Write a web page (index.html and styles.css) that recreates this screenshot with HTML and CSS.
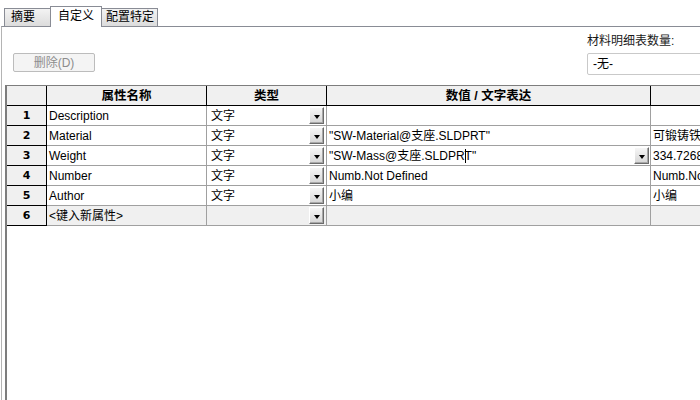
FILE: index.html
```html
<!DOCTYPE html>
<html lang="zh-CN">
<head>
<meta charset="utf-8">
<title>自定义属性</title>
<link rel="stylesheet" href="styles.css">
</head>
<body>
<div class="tabs">
  <div class="tab t1">摘要</div>
  <div class="tab t2 active">自定义</div>
  <div class="tab t3">配置特定</div>
</div>
<div class="panel">
  <div class="toolbar">
    <div class="left"><button class="btn" disabled>删除(D)</button></div>
    <div class="right">
      <div class="lbl">材料明细表数量:</div>
      <div class="combo">-无-</div>
    </div>
  </div>
  <div class="grid">
    <div class="c fix corner"></div>
    <div class="c fix hd">属性名称</div>
    <div class="c fix hd">类型</div>
    <div class="c fix hd">数值 / 文字表达</div>
    <div class="c fix hd"></div>

    <div class="c fix rn">1</div>
    <div class="c">Description</div>
    <div class="c typ"><span class="tx">文字</span><span class="dd"><span class="arr"></span></span></div>
    <div class="c"></div>
    <div class="c"></div>

    <div class="c fix rn">2</div>
    <div class="c">Material</div>
    <div class="c typ"><span class="tx">文字</span><span class="dd"><span class="arr"></span></span></div>
    <div class="c val">"SW-Material@支座.SLDPRT"</div>
    <div class="c">可锻铸铁</div>

    <div class="c fix rn">3</div>
    <div class="c">Weight</div>
    <div class="c typ"><span class="tx">文字</span><span class="dd"><span class="arr"></span></span></div>
    <div class="c val vdd"><span class="tx">"SW-Mass@支座.SLDPR<span class="caret"></span>T"</span><span class="dd"><span class="arr"></span></span></div>
    <div class="c">334.72680</div>

    <div class="c fix rn">4</div>
    <div class="c">Number</div>
    <div class="c typ"><span class="tx">文字</span><span class="dd"><span class="arr"></span></span></div>
    <div class="c val">Numb.Not Defined</div>
    <div class="c">Numb.Not Defined</div>

    <div class="c fix rn">5</div>
    <div class="c">Author</div>
    <div class="c typ"><span class="tx">文字</span><span class="dd"><span class="arr"></span></span></div>
    <div class="c val">小编</div>
    <div class="c">小编</div>

    <div class="c fix rn">6</div>
    <div class="c new">&lt;键入新属性&gt;</div>
    <div class="c new typ"><span class="tx"></span><span class="dd"><span class="arr"></span></span></div>
    <div class="c new"></div>
    <div class="c new"></div>
  </div>
</div>
</body>
</html>
```

FILE: styles.css
```css
html, body {
  margin: 0;
  padding: 0;
  background: #ffffff;
  overflow: hidden;
}
body {
  width: 700px;
  height: 400px;
  font-family: "Liberation Sans", "Noto Sans CJK SC", sans-serif;
  font-size: 12px;
  color: #000;
}
.tabs {
  display: flex;
  align-items: flex-end;
  height: 26px;
  padding-left: 4px;
  box-sizing: border-box;
}
.tab {
  box-sizing: border-box;
  height: 18px;
  line-height: 16px;
  border: 1px solid #898c95;
  border-bottom: none;
  background: linear-gradient(#f3f3f3, #dcdcdc);
  font-size: 12px;
  white-space: nowrap;
}
.t1 { width: 46px; padding-left: 6px; border-right: none; }
.t2 {
  width: 52px;
  height: 21px;
  margin-bottom: -1px;
  padding-left: 7px;
  line-height: 18px;
  background: #ffffff;
  position: relative;
  z-index: 1;
}
.t3 { width: 56px; padding-left: 4px; border-left: none; }
.panel {
  margin-left: 1px;
  border-left: 1px solid #b4b4b4;
  border-top: 1px solid #898c95;
  height: 380px;
  width: 699px;
  overflow: hidden;
}
.toolbar {
  display: grid;
  grid-template-columns: 574px 1fr;
  padding-left: 11px;
  height: 48px;
}
.btn {
  margin-top: 26px;
  width: 82px;
  height: 19px;
  padding: 0;
  border: 1px solid #bcbcbc;
  border-radius: 2px;
  background: #f4f4f4;
  color: #8d8d8d;
  font-family: "Liberation Sans", "Noto Sans CJK SC", sans-serif;
  font-size: 12px;
  line-height: 16px;
}
.right {
  padding-top: 7px;
}
.lbl {
  height: 14px;
  line-height: 14px;
  color: #1a1a1a;
}
.combo {
  margin-top: 5px;
  height: 22px;
  width: 140px;
  box-sizing: border-box;
  border: 1px solid #c9c9c9;
  border-radius: 2px;
  padding-left: 5px;
  line-height: 20px;
  background: #fff;
}
.grid {
  margin-top: 10px;
  margin-left: 3px;
  border-left: 2px solid #7d7d7d;
  border-top: 1px solid #7d7d7d;
  height: 340px;
  display: grid;
  grid-template-columns: 40px 160px 120px 324px 200px;
  grid-auto-rows: 20px;
  align-content: start;
}
.c {
  box-sizing: border-box;
  border-right: 1px solid #a0a0a0;
  border-bottom: 1px solid #a0a0a0;
  padding-left: 2px;
  line-height: 20px;
  white-space: nowrap;
  overflow: hidden;
  background: #fff;
}
.fix {
  background: #f0f0f0;
  border-right-color: #000;
  border-bottom-color: #000;
}
.hd {
  text-align: center;
  font-weight: bold;
  font-size: 12.5px;
  padding-left: 0;
}
.rn {
  text-align: center;
  font-weight: bold;
  padding-left: 0;
  font-family: "DejaVu Sans", sans-serif;
  font-size: 11px;
}
.new { background: #f0f0f0; }
.typ, .vdd {
  display: flex;
  align-items: center;
}
.typ { padding-left: 4px; }
.tx { flex: 1; }
.dd {
  box-sizing: border-box;
  width: 15px;
  height: 17px;
  margin-right: 2px;
  border: 1px solid;
  border-color: #ffffff #6b6b6b #6b6b6b #ffffff;
  background: linear-gradient(#f6f6f6, #d6d6d6);
  box-shadow: inset -1px -1px 0 #a8a8a8;
  display: flex;
  align-items: center;
  justify-content: center;
}
.vdd .dd { margin-right: 1px; }
.arr {
  width: 0;
  height: 0;
  border-left: 3.5px solid transparent;
  border-right: 3.5px solid transparent;
  border-top: 4px solid #000;
  margin-top: 2px;
}
.val { padding-left: 2px; }
.caret {
  display: inline-block;
  width: 1px;
  height: 14px;
  margin-right: -1px;
  background: #000;
  vertical-align: -3px;
}
```
